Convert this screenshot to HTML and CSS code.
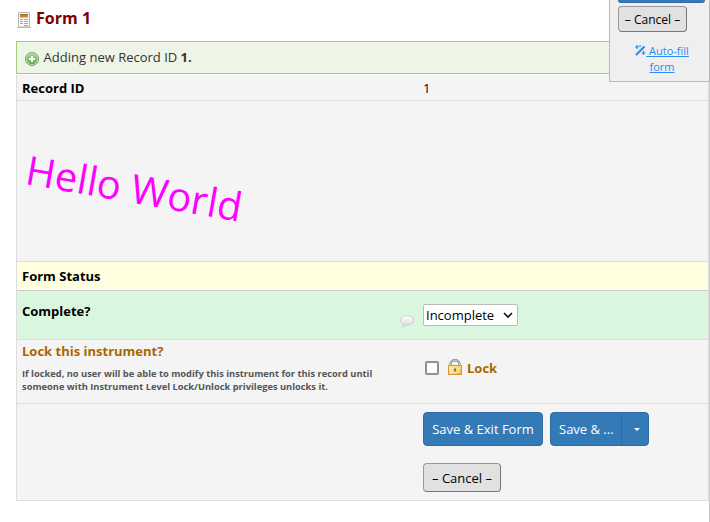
FILE: index.html
```html
<!DOCTYPE html>
<html lang="en">
<head>
<meta charset="utf-8">
<title>Form 1</title>
<link rel="stylesheet" href="styles.css">
</head>
<body>
<main class="page">
  <h1 class="title">
    <svg class="title-icon" width="14" height="16" viewBox="0 0 14 16">
      <path d="M0 15.500h14" stroke="#bbb"/>
      <rect x="1.500" y=".5" width="11" height="14.500" rx=".5" fill="#f8f8f8" stroke="#b5b5b5"/>
      <rect x="3" y="2" width="8" height="3.500" fill="#c8862f"/>
      <path d="M3 2.500h8" stroke="#a3621a"/>
      <path d="M3 7.500h3M7 7.500h4M3 9.500h3M7 9.500h4M3 11.500h3M7 11.500h4M7 13.500h4" stroke="#aaa"/>
    </svg>
    <span>Form 1</span>
  </h1>
  <div class="banner">
    <svg width="14" height="14" viewBox="0 0 14 14">
      <defs><linearGradient id="green" x2="0" y2="1"><stop stop-color="#a5d491"/><stop offset="1" stop-color="#5cad4c"/></linearGradient></defs>
      <circle cx="7" cy="7" r="6.500" fill="#c3e2b8" stroke="#6ba862"/>
      <circle cx="7" cy="7" r="5.200" fill="url(#green)"/>
      <path d="M7 4v6M4 7h6" stroke="#fff" stroke-width="2"/>
    </svg>
    <span>Adding new Record ID <b>1.</b></span>
  </div>
  <section class="form">
    <div class="row row-id"><div class="label">Record ID</div><div class="value">1</div></div>
    <div class="row row-hello"><div class="hello">Hello World</div></div>
    <div class="row row-status"><div class="label">Form Status</div></div>
    <div class="row row-complete">
      <div class="label">Complete?</div>
      <svg class="bubble" width="14" height="13" viewBox="0 0 14 13">
        <defs><linearGradient id="pale" x2="0" y2="1"><stop stop-color="#fff"/><stop offset="1" stop-color="#d8d4dc"/></linearGradient></defs>
        <path d="M7 .6C3.300.6.500 2.600.500 5.200c0 1.700 1.100 3 2.700 3.800L3 12l2.700-2.200c5 .5 7.800-1.800 7.800-4.600C13.500 2.600 10.700.6 7 .6z" fill="url(#pale)" stroke="#c9c4cd" stroke-width=".8"/>
      </svg>
      <div class="value"><div class="select"><span>Incomplete</span><svg width="10" height="7" viewBox="0 0 10 7"><path d="M1 1l4 4 4-4" fill="none" stroke="#111" stroke-width="1.600"/></svg></div></div>
    </div>
    <div class="row row-lock">
      <div class="label">
        <div class="lock-title">Lock this instrument?</div>
        <div class="lock-note">If locked, no user will be able to modify this instrument for this record until<br>someone with Instrument Level Lock/Unlock privileges unlocks it.</div>
      </div>
      <div class="value lock-value">
        <span class="check"></span>
        <svg width="14" height="16" viewBox="0 0 14 16">
          <defs><linearGradient id="gold" x2="1" y2="1"><stop stop-color="#fff0a0"/><stop offset=".6" stop-color="#fbcf60"/><stop offset="1" stop-color="#ee9a22"/></linearGradient></defs>
          <path d="M2.500 7V5a4.500 3.700 0 0 1 9 0v2" fill="none" stroke="#8b8b8b" stroke-width="2.400"/>
          <path d="M2.500 7V5a4.500 3.700 0 0 1 9 0v2" fill="none" stroke="#ccc" stroke-width="1.100"/>
          <rect x=".5" y="6.500" width="13" height="9" fill="url(#gold)" stroke="#dc9a33"/>
          <path d="M2 9.500h3M9 9.500h3M2 11.500h3M9 11.500h3M2 13.500h10" stroke="#fff" stroke-opacity=".6"/>
          <path d="M6 9.500h2v3H6z" fill="#a8701c"/>
        </svg>
        <b>Lock</b>
      </div>
    </div>
    <div class="row row-buttons">
      <div class="value">
        <div class="actions">
          <span class="save save-exit">Save &amp; Exit Form</span>
          <span class="save split"><span class="split-main">Save &amp; ...</span><span class="split-caret"><i class="caret"></i></span></span>
        </div>
        <span class="cancel cancel-large">– Cancel –</span>
      </div>
    </div>
  </section>
</main>
<aside class="floating">
  <div class="save-edge"><i></i></div>
  <span class="cancel cancel-small">– Cancel –</span>
  <a class="autofill"><svg width="11" height="11" viewBox="0 0 11 11"><path d="M1 10L9.500 1.500" stroke="#2a8df5" stroke-width="2.200"/><path d="M2 0v4M0 2h4M5 0v2M8.500 6v4M6.500 8h4" stroke="#2a8df5" stroke-width="1.200"/></svg><u>&nbsp;Auto-fill</u><br><u>form</u></a>
</aside>
</body>
</html>
```
FILE: styles.css
```css
* { box-sizing: border-box; }
body {
  margin: 0;
  width: 710px;
  height: 522px;
  overflow: hidden;
  background: #fff;
  color: #000;
  font: 13px/18px "Open Sans", sans-serif;
}
svg { display: block; flex: none; }
.page {
  height: 522px;
  padding-left: 16px;
  border-right: 1px solid #ccc;
}
.title {
  display: flex;
  gap: 5px;
  height: 41px;
  margin: 0;
  padding: 7px 0 0 1px;
  color: #800000;
  font-size: 16px;
  line-height: 22px;
}
.title-icon { margin-top: 5px; }
.title span { letter-spacing: 0.02px; }
.banner {
  display: flex;
  gap: 4px;
  height: 33px;
  padding: 6px 0 0 8px;
  border: 1px solid #a5cc7a;
  background: #eef5e6;
  color: #333;
}
.banner svg { margin-top: 4px; }
.banner span { padding-left: 0.6px; }
.form {
  margin-top: 1px;
  border-left: 1px solid #ddd;
  border-right: 1px solid #ddd;
}
.row {
  display: flex;
  border-bottom: 1px solid #ddd;
  background: #f4f4f4;
}
.label { width: 406px; padding-left: 5px; font-weight: bold; flex: none; }
.row-id { height: 26px; padding-top: 4px; }
.row-hello { height: 161px; align-items: center; padding: 13px 0 0 8px; }
.hello {
  color: #f0f;
  font-size: 40px;
  line-height: 54px;
  white-space: nowrap;
  transform: rotate(10deg);
}
.row-status { height: 29px; padding-top: 5px; background: #ffffdf; border-color: #ccc; }
.row-complete { height: 49px; background: #daf6df; }
.row-complete .label { width: 383px; padding-top: 11px; }
.bubble { margin: 24px 9px 0 0; }
.row-complete .value { padding-top: 13px; }
.select {
  display: flex;
  align-items: center;
  justify-content: space-between;
  width: 95px;
  height: 22px;
  padding: 0 4px 0 2px;
  border: 1px solid #bbb;
  border-radius: 2px;
  background: #fff;
}
.row-lock { height: 64px; }
.lock-title { padding-top: 2px; color: #a86700; }
.lock-note { margin-top: 7px; color: #555; font-size: 9.320px; line-height: 13px; white-space: nowrap; }
.lock-value {
  display: flex;
  align-items: flex-start;
  padding: 19px 0 0 2px;
  color: #a86700;
}
.check {
  width: 14px;
  height: 14px;
  margin: 2px 9px 0 0;
  border: 2px solid #8f8f9d;
  border-radius: 2px;
  background: #fff;
}
.lock-value b { margin-left: 5px; }
.row-buttons { height: 97px; padding: 8px 0 0 406px; }
.actions { display: flex; gap: 7px; margin-bottom: 17px; }
.save {
  display: flex;
  height: 34px;
  border: 1px solid #2e6da4;
  border-radius: 4px;
  background: #337ab7;
  color: #fff;
  line-height: 32px;
  white-space: nowrap;
}
.save-exit { width: 120px; justify-content: center; }
.split { width: 99px; }
.split-main { width: 71px; padding-left: 8px; border-right: 1px solid #2e6da4; }
.split-caret { display: flex; flex: 1; align-items: center; justify-content: center; padding-left: 3px; }
.caret { border: 3px solid transparent; border-top-color: #fff; border-bottom: 0; }
.cancel {
  display: flex;
  align-items: center;
  justify-content: center;
  border: 1px solid #999;
  border-right-color: #777;
  border-bottom-color: #777;
  border-radius: 4px;
  background: #e1e1e1;
  white-space: nowrap;
}
.cancel-large { width: 78px; height: 29px; }
.floating {
  position: absolute;
  top: 0;
  left: 609px;
  width: 101px;
  height: 82px;
  border: solid #bbb;
  border-width: 0 1px 1px;
  background: #efefef;
}
.save-edge {
  width: 87px;
  height: 3px;
  margin-left: 8px;
  border-bottom: 1px solid #2e6da4;
  border-radius: 0 0 4px 4px;
  background: #337ab7;
}
.save-edge i { display: block; width: 65px; height: 2px; border-right: 1px solid #2e6da4; }
.cancel-small { width: 69px; height: 26px; margin: 3px 0 0 8px; padding-top: 2px; font-size: 12px; }
.autofill {
  display: block;
  margin-top: 11px;
  padding-left: 5px;
  color: #2a8df5;
  font-size: 11px;
  line-height: 16px;
  text-align: center;
}
.autofill svg { display: inline-block; vertical-align: -1px; }
```
